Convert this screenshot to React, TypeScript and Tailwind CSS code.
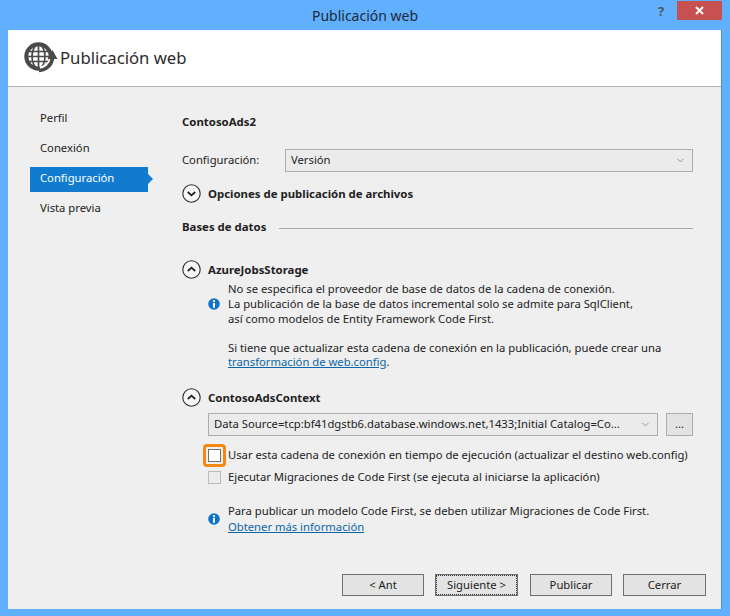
import { ChevronDown } from 'lucide-react';

function Toggle({ open }: { open: boolean }) {
  return (
    <svg width="19" height="19" viewBox="0 0 19 19" className="shrink-0">
      <circle cx="9.5" cy="9.5" r="8.7" fill="#f7f7f7" stroke="#2a2a2a" strokeWidth="1.1" />
      <path
        d={open ? 'M5.8 11 L9.5 7.6 L13.2 11' : 'M5.8 8 L9.5 11.4 L13.2 8'}
        fill="none"
        stroke="#222"
        strokeWidth="1.8"
      />
    </svg>
  );
}

function InfoIcon() {
  return (
    <svg width="12" height="12" viewBox="0 0 12 12" className="shrink-0">
      <circle cx="6" cy="6" r="5.8" fill="#0f73c9" />
      <rect x="5" y="2.2" width="2" height="1.9" fill="#fff" />
      <rect x="5" y="5" width="2" height="4.8" fill="#fff" />
    </svg>
  );
}

function GlobeIcon() {
  return (
    <svg width="32" height="32" viewBox="0 0 32 32" className="shrink-0 overflow-visible">
      <g fill="none" stroke="#4a4a4a">
        <circle cx="15.5" cy="14.5" r="12.2" strokeWidth="4" />
        <ellipse cx="15.5" cy="14.5" rx="6.5" ry="12" strokeWidth="1.7" />
        <path d="M15.5 3 V26 M4 9.5 H27 M3.5 14.5 H27.5 M4 19.5 H27" strokeWidth="1.7" />
      </g>
      {/* flecha que rodea el globo */}
      <path d="M17 27.5 A13 13 0 0 0 29 17" fill="none" stroke="#fff" strokeWidth="6.5" />
      <path d="M16 28.5 A14 14 0 0 0 29.5 16" fill="none" stroke="#4a4a4a" strokeWidth="3.6" />
      <path d="M29.5 8 L34.5 17 L24.5 17 Z" fill="#4a4a4a" />
    </svg>
  );
}

function Select({ text, className }: { text: string; className: string }) {
  return (
    <div className={`flex h-[23px] items-center justify-between border border-[#acacac] bg-[#ebebeb] pl-[5px] pr-[6px] ${className}`}>
      <span className="whitespace-nowrap">{text}</span>
      <ChevronDown size={11} strokeWidth={1.4} className="text-[#666]" />
    </div>
  );
}

function Button({ label, focused, className }: { label: string; focused?: boolean; className: string }) {
  return (
    <div className={`flex h-[22px] items-center justify-center border border-[#707070] bg-[#e3e3e3] ${className}`}>
      {focused ? (
        <span className="flex h-[20px] w-[81px] items-center justify-center border border-dotted border-[#333]">{label}</span>
      ) : (
        label
      )}
    </div>
  );
}

export default function App() {
  const nav = ['Perfil', 'Conexión', 'Configuración', 'Vista previa'];

  return (
    <div className="h-[616px] w-[730px] overflow-hidden bg-[#60b0ff] font-['Noto_Sans','Open_Sans',sans-serif] text-[11.25px] text-[#222]">
      {/* barra de titulo */}
      <div className="relative flex h-[30px] items-center justify-center text-[14px] text-[#1f2a36]">
        Publicación web
        <span className="absolute left-[658px] top-[2px] text-[13px] font-bold text-[#555]">?</span>
        <div className="absolute left-[677px] top-px flex h-[19px] w-[45px] items-center justify-center bg-[#c75050]">
          <svg width="9" height="9" viewBox="0 0 9 9">
            <path d="M1 1 L8 8 M8 1 L1 8" stroke="#fff" strokeWidth="2" />
          </svg>
        </div>
      </div>

      <div className="mx-2 flex h-[579px] w-[714px] flex-col border-r border-[#4a90d8] bg-[#efefef]">
        {/* cabecera */}
        <div className="flex h-[57px] items-center gap-[3px] border-b border-[#b4b4b4] bg-white pl-[15px] text-[16.7px] text-[#2b2b2b]">
          <GlobeIcon />
          <span className="ml-[2px]">Publicación web</span>
        </div>

        <div className="flex flex-1">
          {/* menu lateral */}
          <div className="ml-[22px] mt-[19px] w-[118px] shrink-0">
            {nav.map((item) => (
              <div
                key={item}
                className={
                  item === 'Configuración'
                    ? 'relative mb-[4px] flex h-[25px] items-center bg-[#117ccf] pb-[2px] pl-[10px] text-white'
                    : item === 'Conexión'
                      ? 'mb-[6px] flex h-[25px] items-center pl-[10px]'
                      : 'mb-[5px] flex h-[25px] items-center pl-[10px]'
                }
              >
                {item}
                {item === 'Configuración' && (
                  <span className="absolute left-full top-[7px] h-0 w-0 border-y-[5px] border-l-[5px] border-y-transparent border-l-[#117ccf]" />
                )}
              </div>
            ))}
          </div>

          {/* contenido */}
          <div className="ml-[34px] flex w-[511px] flex-col">
            <div className="mt-[27px] flex h-[16px] items-center text-[11.4px] font-bold">ContosoAds2</div>

            <div className="mt-[19px] flex items-center">
              <span className="w-[103px]">Configuración:</span>
              <Select text="Versión" className="w-[408px]" />
            </div>

            <div className="mt-[12px] flex h-[19px] items-center gap-[7px] text-[11.4px] font-bold">
              <Toggle open={false} />
              Opciones de publicación de archivos
            </div>

            <div className="mt-[16px] flex h-[16px] items-center gap-[13px] text-[11.4px] font-bold">
              <span>Bases de datos</span>
              <div className="mt-[2px] h-px flex-1 bg-[#a8a8a8]" />
            </div>

            <div className="mt-[25px] flex h-[19px] items-center gap-[7px] text-[11.4px] font-bold">
              <Toggle open />
              AzureJobsStorage
            </div>

            <div className="ml-[26px] mt-[2px] flex items-center">
              <InfoIcon />
              <div className="ml-[8px] leading-[15px]">
                <p className="whitespace-nowrap">No se especifica el proveedor de base de datos de la cadena de conexión.</p>
                <p className="whitespace-nowrap">La publicación de la base de datos incremental solo se admite para SqlClient,</p>
                <p className="whitespace-nowrap">así como modelos de Entity Framework Code First.</p>
              </div>
            </div>

            <div className="ml-[46px] mt-[14px] leading-[15px]">
              <p className="whitespace-nowrap">Si tiene que actualizar esta cadena de conexión en la publicación, puede crear una</p>
              <p className="-mt-px whitespace-nowrap">
                <a className="text-[#0b66a8] underline">transformación de web.config</a>.
              </p>
            </div>

            <div className="mt-[19px] flex h-[19px] items-center gap-[7px] text-[11.4px] font-bold">
              <Toggle open />
              ContosoAdsContext
            </div>

            <div className="ml-[26px] mt-[6px] flex items-center gap-[8px]">
              <Select text="Data Source=tcp:bf41dgstb6.database.windows.net,1433;Initial Catalog=Co..." className="w-[450px]" />
              <div className="flex h-[23px] w-[27px] items-center justify-center border border-[#acacac] bg-[#e3e3e3]">...</div>
            </div>

            <div className="ml-[26px] mt-[12px] flex h-[14px] items-center gap-[7px]">
              <div className="relative h-[13px] w-[13px] shrink-0 border border-[#707070] bg-white">
                <div className="absolute left-[-6px] top-[-6px] h-[23px] w-[23px] rounded-[4px] border-[3px] border-[#f28a11]" />
              </div>
              <span className="whitespace-nowrap">Usar esta cadena de conexión en tiempo de ejecución (actualizar el destino web.config)</span>
            </div>

            <div className="ml-[26px] mt-[8px] flex h-[14px] items-center gap-[7px]">
              <div className="h-[13px] w-[13px] shrink-0 border border-[#bcbcbc] bg-[#ececec]" />
              <span className="whitespace-nowrap">Ejecutar Migraciones de Code First (se ejecuta al iniciarse la aplicación)</span>
            </div>

            <div className="ml-[26px] mt-[19px] flex items-center">
              <InfoIcon />
              <div className="ml-[8px] leading-[16px]">
                <p className="whitespace-nowrap">Para publicar un modelo Code First, se deben utilizar Migraciones de Code First.</p>
                <a className="text-[#0b66a8] underline">Obtener más información</a>
              </div>
            </div>

            {/* botones */}
            <div className="ml-[160px] mt-[39px] flex w-[364px]">
              <Button label="< Ant" className="w-[82px]" />
              <Button label="Siguiente >" focused className="ml-[11px] w-[83px]" />
              <Button label="Publicar" className="ml-[12px] w-[82px]" />
              <Button label="Cerrar" className="ml-[11px] w-[83px]" />
            </div>
          </div>
        </div>
      </div>
    </div>
  );
}
